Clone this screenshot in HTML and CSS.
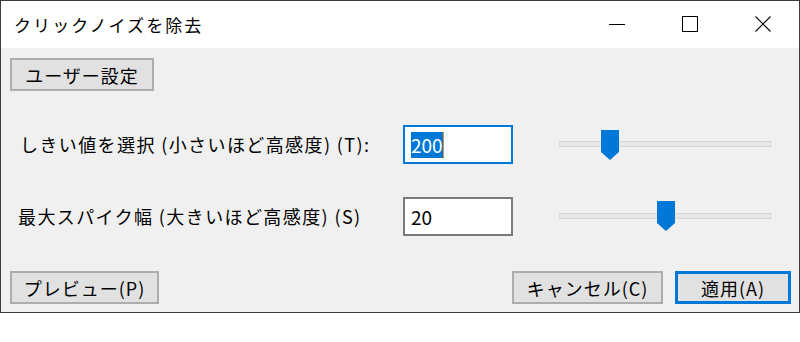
FILE: index.html
```html
<!DOCTYPE html>
<html lang="ja">
<head>
    <meta charset="UTF-8">
    <title>クリックノイズを除去</title>
    <link rel="stylesheet" href="styles.css">
</head>
<body>
<div class="window">
    <!-- タイトルバー -->
    <div class="titlebar">
        <div class="title">クリックノイズを除去</div>
        <div class="caption-buttons">
            <div class="caption-btn">
                <svg width="16" height="16" viewBox="0 0 16 16"><line x1="0" y1="8.5" x2="16" y2="8.5" stroke="#000" stroke-width="1"/></svg>
            </div>
            <div class="caption-btn">
                <svg width="16" height="16" viewBox="0 0 16 16"><rect x="0.5" y="0.5" width="15" height="15" fill="none" stroke="#000" stroke-width="1"/></svg>
            </div>
            <div class="caption-btn">
                <svg width="16" height="16" viewBox="0 0 16 16"><path d="M0.5 0.5 L15.5 15.5 M15.5 0.5 L0.5 15.5" stroke="#000" stroke-width="1.1"/></svg>
            </div>
        </div>
    </div>

    <!-- 本体 -->
    <div class="dialog">
        <button class="btn btn-presets">ユーザー設定</button>

        <div class="row row-first">
            <div class="label">しきい値を選択 (小さいほど高感度) (T):</div>
            <div class="textbox focused"><span class="selected">200</span><span class="caret"></span></div>
            <div class="slider">
                <div class="track"></div>
                <svg class="thumb" style="left: 42px;" width="18" height="30" viewBox="0 0 18 30"><polygon points="0,0 18,0 18,22 9,30 0,22" fill="#0078d7"/></svg>
            </div>
        </div>

        <div class="row">
            <div class="label">最大スパイク幅 (大きいほど高感度) (S)</div>
            <div class="textbox">20</div>
            <div class="slider">
                <div class="track"></div>
                <svg class="thumb" style="left: 98px;" width="18" height="30" viewBox="0 0 18 30"><polygon points="0,0 18,0 18,22 9,30 0,22" fill="#0078d7"/></svg>
            </div>
        </div>

        <div class="footer">
            <button class="btn btn-preview">プレビュー(P)</button>
            <div class="spacer"></div>
            <button class="btn btn-cancel">キャンセル(C)</button>
            <button class="btn btn-apply">適用(A)</button>
        </div>
    </div>
</div>
</body>
</html>
```

FILE: styles.css
```css
body {
    margin: 0;
    background-color: #ffffff;
    font-family: "Noto Sans CJK JP", "Noto Sans", sans-serif;
    color: #000;
}

/* ウィンドウ */
.window {
    width: 800px;
    height: 313px;
    box-sizing: border-box;
    border: 1px solid #3c3c3c;
    display: flex;
    flex-direction: column;
}

.titlebar {
    height: 47px;
    background-color: #ffffff;
    display: flex;
    align-items: center;
}

.title {
    flex: 1;
    padding-left: 13px;
    font-size: 17px;
    letter-spacing: 2.1px;
    line-height: 47px;
}

.caption-buttons {
    display: flex;
    height: 100%;
}

.caption-btn {
    width: 73px;
    height: 47px;
    display: flex;
    align-items: center;
    justify-content: center;
}

.caption-btn svg {
    display: block;
    margin-top: -1px;
}

/* 本体 */
.dialog {
    flex: 1;
    background-color: #f0f0f0;
    padding: 10px 8px 8px 9px;
    display: flex;
    flex-direction: column;
}

.btn {
    height: 33px;
    box-sizing: border-box;
    background-color: #e1e1e1;
    border: 2px solid #adadad;
    font-family: inherit;
    font-size: 18px;
    color: #000;
    padding: 0;
    letter-spacing: 1px;
    line-height: 1;
}

.btn-presets {
    width: 144px;
    align-self: flex-start;
}

.row {
    display: flex;
    align-items: flex-start;
    height: 39px;
    margin-top: 33px;
}

.row-first {
    margin-top: 34px;
}

.label {
    width: 393px;
    box-sizing: border-box;
    padding-left: 10px;
    font-size: 18px;
    line-height: 39px;
    letter-spacing: 1.4px;
    white-space: nowrap;
}

.row:not(.row-first) .label {
    padding-left: 8px;
}

.textbox {
    width: 110px;
    height: 39px;
    box-sizing: border-box;
    background-color: #ffffff;
    border: 2px solid #7a7a7a;
    font-size: 19px;
    line-height: 35px;
    padding-left: 6px;
    display: flex;
    align-items: center;
}

.textbox.focused {
    border-color: #0078d7;
}

.selected {
    background-color: #0078d7;
    color: #ffffff;
    line-height: 26px;
}

.caret {
    width: 1px;
    height: 26px;
    background-color: #e08a2a;
}

.slider {
    position: relative;
    width: 212px;
    height: 39px;
    margin-left: 46px;
}

.track {
    margin-top: 16px;
    height: 6px;
    box-sizing: border-box;
    background-color: #e7e7e7;
    border: 1px solid #d6d6d6;
}

.thumb {
    position: absolute;
    top: 5px;
}

.row:not(.row-first) .thumb {
    top: 4px;
}

/* 下部ボタン */
.footer {
    display: flex;
    margin-top: auto;
}

.spacer {
    flex: 1;
}

.btn-preview {
    width: 149px;
}

.btn-cancel {
    width: 151px;
    margin-right: 12px;
}

.btn-apply {
    width: 116px;
    border: 3px solid #0078d7;
}
```
